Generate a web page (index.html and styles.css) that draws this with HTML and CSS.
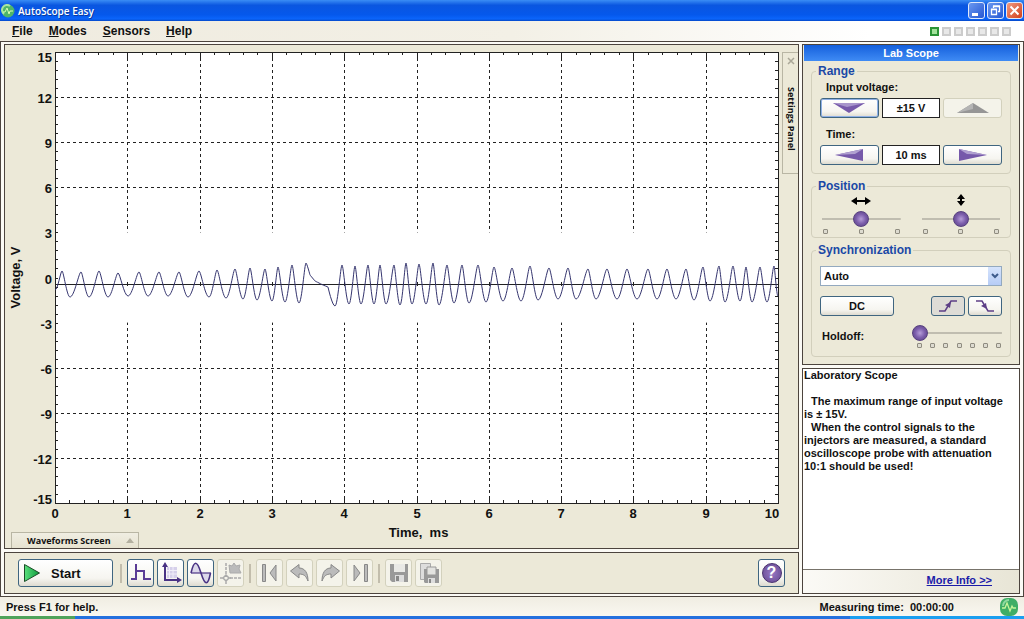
FILE: index.html
```html
<!DOCTYPE html>
<html lang="en">
<head>
    <meta charset="UTF-8">
    <meta name="viewport" content="width=device-width, initial-scale=1.0">
    <title>AutoScope Easy</title>
    <link rel="stylesheet" href="styles.css">
</head>
<body>

<header class="titlebar">
    <svg class="app-icon" width="14" height="14" viewBox="0 0 14 14"><circle cx="7" cy="7" r="6.5" fill="#4fb56a"/><path d="M3 10A5 5 0 0 1 9 2" stroke="#a8e6a0" stroke-width="2" fill="none"/><path d="M2 8h2l2-4 2 6 1-3h3" stroke="#d9ffb0" fill="none"/></svg>
    <h1>AutoScope Easy</h1>
    <div class="window-buttons">
        <button aria-label="Minimize"><svg width="15" height="15" viewBox="0 0 15 15"><path d="M3 11.5h6" stroke="#fff" stroke-width="3"/></svg></button>
        <button aria-label="Restore"><svg width="15" height="15" viewBox="0 0 15 15" fill="none" stroke="#fff"><path d="M5.500 5V3.500h6v5H10M5 3h7" stroke-width="1.300"/><path d="M3.500 6.500h5v5h-5zM3 6.200h6" stroke-width="1.300"/></svg></button>
        <button class="close" aria-label="Close"><svg width="15" height="15" viewBox="0 0 15 15"><path d="M3.500 3.500l8 8M11.500 3.500l-8 8" stroke="#fff" stroke-width="2"/></svg></button>
    </div>
</header>

<nav class="menubar">
    <a href="#"><u>F</u>ile</a>
    <a href="#"><u>M</u>odes</a>
    <a href="#"><u>S</u>ensors</a>
    <a href="#"><u>H</u>elp</a>
    <div class="leds">
        <i class="on"></i><i></i><i></i><i></i><i></i><i></i><i></i>
    </div>
</nav>

<main class="workspace">
    <div class="left">
        <section class="panel screen">
            <svg id="chart"></svg>
            <button class="wave-tab">Waveforms Screen <svg width="8" height="5" viewBox="0 0 8 5"><path d="M4 0l4 5H0z" fill="#b3b0a0"/></svg></button>
            <button class="side-tab"><svg width="8" height="8" viewBox="0 0 8 8"><path d="M1 1l6 6M7 1L1 7" stroke="#aaa798" stroke-width="1.500"/></svg><span>Settings Panel</span></button>
        </section>

        <section class="panel toolbar">
            <button class="btn start"><svg width="18" height="20" viewBox="0 0 18 20"><defs><linearGradient id="play" x2="1"><stop offset="0" stop-color="#5be07c"/><stop offset="1" stop-color="#0c9a3c"/></linearGradient></defs><path d="M1.500 1.500l15 8.500-15 8.500z" fill="url(#play)" stroke="#1c4c28"/></svg>Start</button>
            <hr>
            <button class="btn tool" aria-label="Pulse"><svg width="22" height="22" viewBox="0 0 22 22" fill="none" stroke="#5a3c96" stroke-width="2"><path d="M1 17h5M6 18V2M6 9h8v8h7"/></svg></button>
            <button class="btn tool" aria-label="Axes"><svg width="22" height="22" viewBox="0 0 22 22"><path d="M7 5h10v11H7z" fill="#d6d0ea"/><path d="M9.500 5v11M13 5v11M7 8.500h10M7 12h10" stroke="#f1eef9"/><path d="M5 4v14h13" fill="none" stroke="#4a3384" stroke-width="2"/><path d="M5 0l3 5H2zM22 18l-5 3v-6z" fill="#4a3384"/></svg></button>
            <button class="btn tool" aria-label="Waveform"><svg width="22" height="22" viewBox="0 0 22 22"><path d="M1 11C4-2 7-2 11 11s7 13 9.500 0z" fill="#dcd8ea"/><path d="M1 11h20" stroke="#4a3384" stroke-width="1.200"/><path d="M1 11C4-2 7-2 11 11s7 13 9.500 0" fill="none" stroke="#4a3384" stroke-width="1.600"/></svg></button>
            <button class="btn tool" disabled aria-label="Marker"><svg width="22" height="22" viewBox="0 0 22 22" fill="none" stroke="#aaa"><path d="M6 1v11M10 16h12" stroke-width="1.500" stroke-dasharray="3 1"/><path d="M6 13l3 3-3 3-3-3zM0 16h3M9 16h2M6 19v3" stroke-width="1.500"/><path d="M9 3l3 1 2-3 2 3 4-1-1 4 2 4H10z" fill="#bbb"/></svg></button>
            <hr>
            <button class="btn tool" disabled aria-label="First"><svg width="22" height="22" viewBox="0 0 22 22" fill="#bbb" stroke="#888"><path d="M3.500 2.500h3v17h-3zM17 3v16l-6-8z"/></svg></button>
            <button class="btn tool" disabled aria-label="Back"><svg width="22" height="22" viewBox="0 0 22 22"><path d="M1.500 9L10 2.500V6c6 0 9 5 9 13-2-5-4-7-9-7v4z" fill="#bbb" stroke="#888"/></svg></button>
            <button class="btn tool" disabled aria-label="Forward"><svg width="22" height="22" viewBox="0 0 22 22"><path d="M20.500 9L12 2.500V6c-6 0-9 5-9 13 2-5 4-7 9-7v4z" fill="#bbb" stroke="#888"/></svg></button>
            <button class="btn tool" disabled aria-label="Last"><svg width="22" height="22" viewBox="0 0 22 22" fill="#bbb" stroke="#888"><path d="M15.500 2.500h3v17h-3zM5 3v16l6-8z"/></svg></button>
            <hr>
            <button class="btn tool" disabled aria-label="Save"><svg width="22" height="22" viewBox="0 0 22 22"><path d="M2 2h18v18H4l-2-2z" fill="#999"/><path d="M6 2h11v8H6z" fill="#e9e9e6"/><path d="M7 13h9v7H7z" fill="#ddd"/><path d="M8 14h3v5H8z" fill="#888"/></svg></button>
            <button class="btn tool" disabled aria-label="Save all"><svg width="22" height="22" viewBox="0 0 22 22"><path d="M2.500 1.500h10v16h-10z" fill="#ddd" stroke="#aaa"/><path d="M6 7h15v14H7l-1-1z" fill="#999"/><path d="M9 5h9v8H9z" fill="#e3e3e0" stroke="#999"/><path d="M10 16h7v5h-7z" fill="#ddd"/><path d="M11 17h2v4h-2z" fill="#888"/></svg></button>
            <button class="btn tool help" aria-label="Help"><span>?</span></button>
        </section>
    </div>

    <div class="right">
        <section class="panel settings">
            <h2>Lab Scope</h2>

            <fieldset>
                <legend>Range</legend>
                <div class="name">Input voltage:</div>
                <div class="stepper">
                    <button class="btn active" aria-label="Lower voltage"><svg width="32" height="10" viewBox="0 0 32 10"><path d="M0 0h32L16 10z" fill="#7659aa"/><path d="M0 0h32L14 4z" fill="#a795cb"/></svg></button>
                    <output>±15 V</output>
                    <button class="btn" disabled aria-label="Raise voltage"><svg width="32" height="10" viewBox="0 0 32 10"><path d="M0 10h32L16 0z" fill="#969696"/><path d="M0 10L16 0v6z" fill="#b4b4b4"/></svg></button>
                </div>
                <div class="name second">Time:</div>
                <div class="stepper">
                    <button class="btn" aria-label="Shorter time"><svg width="28" height="12" viewBox="0 0 28 12"><path d="M28 0v12L0 6z" fill="#7659aa"/><path d="M28 0L0 6l20-1z" fill="#b0a0d0"/></svg></button>
                    <output>10 ms</output>
                    <button class="btn" aria-label="Longer time"><svg width="28" height="12" viewBox="0 0 28 12"><path d="M0 0v12l28-6z" fill="#7659aa"/><path d="M0 0l28 6-20-1z" fill="#b0a0d0"/></svg></button>
                </div>
            </fieldset>

            <fieldset class="position">
                <legend>Position</legend>
                <div class="slider">
                    <svg width="20" height="16" viewBox="0 0 20 16"><path d="M3 8h14" stroke="#000" stroke-width="2"/><path d="M0 8l6-4v8zM20 8l-6-4v8z"/></svg>
                    <input type="range" min="0" max="100" value="50" aria-label="Horizontal position">
                    <div class="dots"><i></i><i></i><i></i></div>
                </div>
                <div class="slider">
                    <svg width="10" height="16" viewBox="0 0 10 16"><path d="M5 3v8" stroke="#000" stroke-width="2"/><path d="M5 1l4 5H1zM5 13l4-5H1z"/></svg>
                    <input type="range" min="0" max="100" value="50" aria-label="Vertical position">
                    <div class="dots"><i></i><i></i><i></i></div>
                </div>
            </fieldset>

            <fieldset class="sync">
                <legend>Synchronization</legend>
                <div class="combo">
                    <select aria-label="Synchronization mode"><option>Auto</option><option>Manual</option></select>
                    <span><svg width="8" height="6" viewBox="0 0 8 6"><path d="M1 1l3 3 3-3" fill="none" stroke="#3d5b8c" stroke-width="2"/></svg></span>
                </div>
                <div class="row">
                    <button class="btn dc">DC</button>
                    <button class="btn edge pressed" aria-label="Rising edge"><svg width="18" height="12" viewBox="0 0 18 12"><path d="M0 11h6l6-10h6" fill="none" stroke="#5d3f86" stroke-width="1.500"/><path d="M12 2l-1 6-5-3z" fill="#5d3f86"/></svg></button>
                    <button class="btn edge" aria-label="Falling edge"><svg width="18" height="12" viewBox="0 0 18 12"><path d="M0 1h6l6 10h6" fill="none" stroke="#5d3f86" stroke-width="1.500"/><path d="M11 9l-1-6-5 3z" fill="#5d3f86"/></svg></button>
                </div>
                <div class="row holdoff">
                    <label for="holdoff">Holdoff:</label>
                    <div class="slider">
                        <input type="range" id="holdoff" min="0" max="6" value="0">
                        <div class="dots"><i></i><i></i><i></i><i></i><i></i><i></i><i></i></div>
                    </div>
                </div>
            </fieldset>
        </section>

        <section class="panel info">
            <div class="info-text">
                <p>Laboratory Scope</p>
                <br>
                <p class="indent">The maximum range of input voltage is ± 15V.</p>
                <p class="indent">When the control signals to the injectors are measured, a standard oscilloscope probe with attenuation 10:1 should be used!</p>
            </div>
            <footer><a href="#">More Info &gt;&gt;</a></footer>
        </section>
    </div>
</main>

<footer class="statusbar">
    <span>Press F1 for help.</span>
    <span class="time">Measuring time:&nbsp; 00:00:00</span>
    <svg width="18" height="18" viewBox="0 0 18 18"><rect width="18" height="18" rx="7" fill="#3fae66"/><path d="M3 8a6 6 0 0 1 6-6" stroke="#8fd8a0" stroke-width="2" fill="none"/><path d="M2 10h3l2-5 3 8 2-5 1 2h3" stroke="#c8f59a" fill="none" stroke-width="1.300"/></svg>
</footer>
<div class="taskbar"><i class="task-start"></i><i class="task-tray"></i></div>

<script src="script.js"></script>
</body>
</html>
```
FILE: styles.css
```css
* {
    box-sizing: border-box;
}
body {
    margin: 0;
    height: 100vh;
    display: flex;
    flex-direction: column;
    overflow: hidden;
    font-family: "Liberation Sans", Arial, sans-serif;
    font-size: 11px;
    font-weight: bold;
    color: #111;
    background-color: #ece9d8;
}
h1, h2, p {
    margin: 0;
}
button, select {
    font: inherit;
    color: inherit;
    padding: 0;
}
svg {
    display: block;
    flex: none;
}

/* title bar */
.titlebar {
    flex: none;
    height: 21px;
    display: flex;
    align-items: center;
    padding: 0 1px;
    background: linear-gradient(#3a8df5, #0a56e0 25%, #0558ec 70%, #0b65fb 90%, #0448c8);
}
.titlebar h1 {
    margin-left: 3px;
    font: 600 10px/16px "Open Sans", sans-serif;
    color: #fff;
    text-shadow: 1px 1px #0a3a9c;
}
.window-buttons {
    display: flex;
    gap: 2px;
    margin-left: auto;
}
.window-buttons button {
    display: flex;
    width: 17px;
    height: 17px;
    border: 1px solid #dfe9fb;
    border-radius: 3px;
    background: linear-gradient(135deg, #6a98f0, #2557d2);
}
.window-buttons .close {
    background: linear-gradient(135deg, #f09a80, #d2401c);
}

/* menu */
.menubar {
    flex: none;
    height: 20px;
    display: flex;
    align-items: center;
    gap: 16px;
    padding: 0 13px 0 12px;
    font-size: 12px;
    background: linear-gradient(to right, #efebdf, #f3f0e6 50%, #fff 85%);
}
.menubar a {
    color: #111;
    text-decoration: none;
}
.leds {
    display: flex;
    gap: 3px;
    margin-left: auto;
}
.leds i {
    width: 9px;
    height: 9px;
    border: 2px solid #ccc;
    background: #e8e8e8;
}
.leds .on {
    border-color: #2a9436;
    background: #a2e29b;
}

/* work area */
.workspace {
    flex: 1;
    min-height: 0;
    display: flex;
    gap: 3px;
    padding: 2px 3px 2px;
    border: 1px solid #4c443e;
    background: #fbfaf5;
}
.left, .right {
    display: flex;
    flex-direction: column;
    gap: 3px;
}
.left {
    flex: 1;
    min-width: 0;
}
.right {
    flex: none;
    width: 218px;
}
.panel {
    border: 1px solid #4c443e;
    background: #ece9d8;
}

.screen {
    flex: 1;
    min-height: 0;
    display: grid;
    grid-template-columns: minmax(0, 1fr) 16px;
    grid-template-rows: minmax(0, 1fr) 16px;
}
#chart {
    grid-area: 1 / 1 / 3 / 2;
    width: 100%;
    height: 100%;
    font-size: 13px;
}
.wave-tab, .side-tab {
    border: 1px solid #b9b6a4;
    background: #ece9d8;
    font: bold 9px/12px "Open Sans", sans-serif;
    display: flex;
    align-items: center;
}
.wave-tab {
    grid-area: 2 / 1;
    width: 128px;
    margin-left: 6px;
    padding: 0 4px 0 15px;
    border-bottom: 0;
    justify-content: space-between;
    background: linear-gradient(#f0eee2, #e6e2d0);
}
.side-tab {
    grid-area: 1 / 2;
    height: 122px;
    margin-top: 7px;
    padding-top: 4px;
    border-right: 0;
    flex-direction: column;
    gap: 22px;
}
.side-tab span {
    writing-mode: vertical-rl;
}

/* buttons */
.btn {
    display: flex;
    align-items: center;
    justify-content: center;
    border: 1px solid #3f6580;
    border-radius: 3px;
    background: linear-gradient(#fff, #f6f5f0 70%, #dedbd0);
}
.btn:disabled {
    border-color: #d3d1bd;
    background: #f4f3ea;
}
.btn.active {
    box-shadow: inset 0 0 0 1px #8fb0e6;
}
.btn.pressed {
    background: #dedcd6;
}

.toolbar {
    flex: none;
    height: 42px;
    display: flex;
    align-items: center;
    gap: 3px;
    padding: 0 13px;
}
.toolbar hr {
    width: 2px;
    height: 19px;
    margin: 0 2px;
    border: 0;
    background: #c2bdac;
}
.tool {
    width: 27px;
    height: 28px;
}
.start {
    width: 95px;
    height: 28px;
    margin-right: 2px;
    padding-left: 4px;
    justify-content: flex-start;
    gap: 10px;
    font-size: 13px;
}
.help {
    margin-left: auto;
}
.help span {
    width: 20px;
    height: 20px;
    border: 1px solid #49306f;
    border-radius: 50%;
    background: radial-gradient(#9878c4, #64478f);
    color: #fff;
    font-size: 16px;
    line-height: 18px;
}

/* settings */
.settings {
    flex: none;
    height: 321px;
    padding: 0 1px;
}
.settings h2 {
    height: 16px;
    font-size: 11px;
    line-height: 16px;
    text-align: center;
    color: #fff;
    background: linear-gradient(#1560dc, #3f8bf4);
}
fieldset {
    min-width: 0;
    margin: 3px 7px 0;
    padding: 2px 8px 8px;
    border: 1px solid #d2cfbc;
    border-radius: 4px;
}
legend {
    padding: 0 2px;
    margin-left: -4px;
    font-size: 12px;
    line-height: 14px;
    color: #1a48a6;
}
.name {
    margin: 0 0 4px 6px;
    line-height: 14px;
}
.name.second {
    margin-top: 9px;
}
.stepper {
    display: flex;
    gap: 3px;
}
.stepper > * {
    flex: 1;
    height: 20px;
}
.stepper output {
    border: 1px solid #222;
    background: #fff;
    line-height: 18px;
    text-align: center;
}

.position {
    display: flex;
    gap: 21px;
    margin-top: 5px;
    padding: 0 10px 3px;
}
.position legend {
    margin-left: -6px;
}
.slider {
    flex: 1;
    display: flex;
    flex-direction: column;
    align-items: center;
    min-width: 0;
}
input[type=range] {
    appearance: none;
    width: 100%;
    height: 20px;
    margin: 0;
    background: linear-gradient(#c0bdb0, #c0bdb0) center / 100% 2px no-repeat;
}
input[type=range]::-webkit-slider-thumb {
    appearance: none;
    width: 16px;
    height: 16px;
    border: 1px solid #57407f;
    border-radius: 50%;
    background: radial-gradient(circle at 50% 50%, #b59cd8, #7a5caa 50%, #58407f);
}
.dots {
    width: 100%;
    display: flex;
    justify-content: space-between;
    padding: 0 1px;
}
.dots i {
    width: 5px;
    height: 5px;
    border: 1px solid #8f8c80;
    border-radius: 1px;
    background: #dddbd0;
}

.sync {
    margin-top: 5px;
    padding: 9px 8px 8px;
}
.combo {
    display: grid;
    height: 20px;
}
.combo select, .combo span {
    grid-area: 1 / 1;
}
.combo select {
    appearance: none;
    padding-left: 3px;
    border: 1px solid #93a9bf;
    border-radius: 0;
    background: #fff;
}
.combo span {
    justify-self: end;
    width: 13px;
    margin: 1px;
    display: flex;
    align-items: center;
    justify-content: center;
    background: linear-gradient(#d6e4fd, #b6ccf6);
    pointer-events: none;
}
.row {
    display: flex;
    align-items: center;
    gap: 3px;
    margin-top: 10px;
}
.row .btn {
    height: 20px;
}
.dc {
    width: 74px;
    margin-right: auto;
}
.edge {
    width: 34px;
}
.holdoff {
    margin-top: 7px;
    gap: 48px;
    padding-left: 2px;
}
.holdoff .dots {
    padding: 0 1px 0 5px;
}

/* info */
.info {
    flex: 1;
    min-height: 0;
    display: flex;
    flex-direction: column;
    background: #fff;
}
.info-text {
    flex: 1;
    padding: 0 8px 0 1px;
    line-height: 13px;
}
.info-text .indent {
    text-indent: 7px;
}
.info footer {
    height: 24px;
    padding-right: 27px;
    border-top: 1px solid #77736a;
    line-height: 21px;
    text-align: right;
    background: linear-gradient(to right, #fbfaf6, #e8e5d6);
}
.info a {
    color: #1c1ca8;
}

/* status bar */
.statusbar {
    flex: none;
    height: 19px;
    display: flex;
    align-items: center;
    padding: 0 6px;
    background: linear-gradient(#f0ede2, #f9f7f0);
}
.statusbar .time {
    margin-left: auto;
    margin-right: 46px;
}
.taskbar {
    flex: none;
    height: 3px;
    display: flex;
    background: #2470de;
}
.task-start {
    width: 75px;
    background: #4fa35a;
}
.task-tray {
    width: 17%;
    margin-left: auto;
    background: #1b9ff0;
}
```
FILE: script.js
```js
const chart = document.getElementById('chart');

// turning points of the trace on a 723 x 451 plot, y measured up from zero
const trace = [
    [0, -6], [7, 13], [15, -13], [26, 12], [34, -13], [44, 13], [53, -13], [63, 11], [73, -12],
    [84, 12], [93, -12], [104, 12], [113, -12], [124, 12], [133, -13], [144, 13], [154, -13],
    [162, 14], [171, -14], [180, 15], [188, -15], [195, 16], [202, -16], [210, 15], [217, -17],
    [223, 17], [230, -18], [237, 19], [244, -19], [251, 21], [255, 9], [260, 3], [268, -1], [273, -3], [280, -22],
    [287, 19], [294, -20], [300, 18], [306, -20], [313, 19], [319, -20], [325, 19], [331, -20],
    [339, 19], [345, -21], [351, 21], [357, -20], [364, 20], [371, -20], [378, 21], [384, -21],
    [392, 19], [399, -19], [407, 19], [414, -19], [423, 19], [431, -18], [439, 17], [448, -17],
    [457, 16], [466, -17], [475, 18], [483, -16], [494, 16], [503, -15], [513, 16], [521, -15],
    [533, 15], [541, -15], [552, 15], [562, -15], [572, 15], [582, -15], [593, 15], [602, -15],
    [612, 15], [621, -15], [631, 15], [639, -16], [648, 17], [655, -17], [664, 18], [670, -18],
    [678, 18], [685, -17], [691, 17], [697, -18], [705, 17], [712, -18], [719, 18], [723, -12]
];

function line(x1, y1, x2, y2, extra) {
    return `<line x1="${x1}" y1="${y1}" x2="${x2}" y2="${y2}" stroke="#222" shape-rendering="crispEdges" ${extra || ''}/>`;
}

function text(x, y, value, anchor, extra) {
    return `<text x="${x}" y="${y}" text-anchor="${anchor}" fill="#111" ${extra || ''}>${value}</text>`;
}

// troughs are round, crests are sharper
function ease(value) {
    return value < -4 ? 0.4 : value > 10 ? 0.2 : 0;
}

function drawChart() {
    const left = 50, top = 7;
    const right = chart.clientWidth - 4;
    const bottom = chart.clientHeight - 45;
    const w = right - left, h = bottom - top;
    const zero = Math.round(top + h * 0.514);
    const dash = 'stroke-dasharray="3 3"';
    let out = `<rect x="${left}" y="${top}" width="${w}" height="${h}" fill="#fff"/>`;

    // grid with labels
    for (let i = 0; i <= 10; i++) {
        const x = Math.round(left + w * i / 10);
        const y = Math.round(top + h * i / 10);
        if (i > 0 && i < 10) {
            out += line(x, top, x, bottom, dash);
            if (i < 4 || i > 6) out += line(left, y, right, y, dash);
        }
        out += text(i === 10 ? x - 6 : x, bottom + 15, i, 'middle');
        const shift = i === 0 ? 10 : i === 10 ? 1 : 6;
        out += text(left - 3, y + shift, 15 - i * 3, 'end');
    }

    // clear band behind the trace
    out += `<rect x="${left}" y="${top + h * 0.4}" width="${w}" height="${h * 0.2}" fill="#fff"/>`;

    // ticks
    for (let i = 0; i <= 50; i++) {
        const x = Math.round(left + w * i / 50);
        const y = Math.round(top + h * i / 50);
        const long = i % 5 === 0 ? 6 : 3;
        out += line(x, top, x, top + long) + line(x, bottom, x, bottom - long);
        out += line(left, y, left + 3, y) + line(right, y, right - 3, y);
        if (i % 5 === 0) out += line(x, zero - 2, x, zero + 2);
    }
    out += `<rect x="${left}" y="${top}" width="${w}" height="${h}" fill="none" stroke="#222" shape-rendering="crispEdges"/>`;
    out += line(left, zero, right, zero);

    // trace
    let d = '';
    trace.forEach(([px, py], i) => {
        const x = left + px * w / 723;
        const y = zero - py * h / 451;
        if (i === 0) {
            d += `M${x} ${y}`;
        } else {
            const [qx, qy] = trace[i - 1];
            const prevX = left + qx * w / 723;
            const prevY = zero - qy * h / 451;
            const dx = x - prevX;
            d += `C${prevX + dx * ease(qy)} ${prevY} ${x - dx * ease(py)} ${y} ${x} ${y}`;
        }
    });
    out += `<path d="${d}" fill="none" stroke="#34346e"/>`;

    // axis names
    out += text(left + w / 2 + 2, bottom + 34, 'Time,&#160; ms', 'middle');
    out += text(0, 0, 'Voltage, V', 'middle', `transform="translate(15 ${top + h / 2}) rotate(-90)"`);
    chart.innerHTML = out;
}

drawChart();
window.addEventListener('resize', drawChart);
```
